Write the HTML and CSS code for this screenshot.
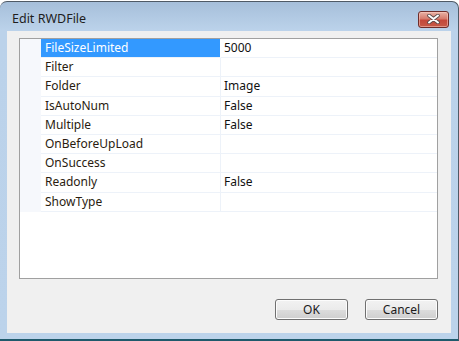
FILE: index.html
```html
<!DOCTYPE html>
<html lang="en">
<head>
    <meta charset="UTF-8">
    <title>Edit RWDFile</title>
    <link rel="stylesheet" href="styles.css">
</head>
<body>
    <div class="window">
        <div class="titlebar">
            <span class="title">Edit RWDFile</span>
            <div class="close-btn">
                <svg width="13" height="10" viewBox="0 0 13 10">
                    <path d="M2 1.5 L11 8.5 M11 1.5 L2 8.5" stroke="#5a4a4a" stroke-width="3.6" stroke-linecap="round"/>
                    <path d="M2 1.5 L11 8.5 M11 1.5 L2 8.5" stroke="#ffffff" stroke-width="2" stroke-linecap="round"/>
                </svg>
            </div>
        </div>

        <div class="client">
            <div class="grid">
                <div class="row selected">
                    <div class="gutter"></div>
                    <div class="name">FileSizeLimited</div>
                    <div class="value">5000</div>
                </div>
                <div class="row">
                    <div class="gutter"></div>
                    <div class="name">Filter</div>
                    <div class="value"></div>
                </div>
                <div class="row">
                    <div class="gutter"></div>
                    <div class="name">Folder</div>
                    <div class="value">Image</div>
                </div>
                <div class="row">
                    <div class="gutter"></div>
                    <div class="name">IsAutoNum</div>
                    <div class="value">False</div>
                </div>
                <div class="row">
                    <div class="gutter"></div>
                    <div class="name">Multiple</div>
                    <div class="value">False</div>
                </div>
                <div class="row">
                    <div class="gutter"></div>
                    <div class="name">OnBeforeUpLoad</div>
                    <div class="value"></div>
                </div>
                <div class="row">
                    <div class="gutter"></div>
                    <div class="name">OnSuccess</div>
                    <div class="value"></div>
                </div>
                <div class="row">
                    <div class="gutter"></div>
                    <div class="name">Readonly</div>
                    <div class="value">False</div>
                </div>
                <div class="row">
                    <div class="gutter"></div>
                    <div class="name">ShowType</div>
                    <div class="value"></div>
                </div>
            </div>

            <div class="buttons">
                <button class="btn">OK</button>
                <button class="btn">Cancel</button>
            </div>
        </div>
    </div>
</body>
</html>
```

FILE: styles.css
```css
* {
    margin: 0;
    padding: 0;
    box-sizing: border-box;
}

body {
    font-family: "Noto Sans", "Open Sans", sans-serif;
    font-size: 12px;
    background: #ffffff;
    width: 459px;
    height: 341px;
    overflow: hidden;
}

.window {
    margin-top: 1px;
    width: 459px;
    height: 340px;
    border-top: 1px solid #4f5a66;
    border-right: 1px solid #4f5a66;
    border-bottom: 2px solid #1f5a6c;
    border-radius: 7px 7px 0 0;
    background: linear-gradient(#a6bfda, #bbd2ea 28px, #bcd3eb);
    padding: 0 7px 6px 7px;
    display: flex;
    flex-direction: column;
}

.titlebar {
    height: 30px;
    display: flex;
    align-items: center;
    padding-left: 5px;
    padding-right: 2px;
}

.title {
    flex: 1;
    font-size: 12.5px;
    color: #1e1e1e;
    padding-top: 3px;
}

.close-btn {
    width: 31px;
    height: 17px;
    margin-top: 5px;
    border: 1px solid #6e2d2a;
    border-radius: 3px;
    background: linear-gradient(#e8b2a6, #d77b6c 45%, #c4483a 55%, #c65a48);
    display: flex;
    align-items: center;
    justify-content: center;
    box-shadow: inset 0 0 0 1px rgba(255, 210, 200, 0.5);
}

.client {
    flex: 1;
    background: #f0f0f0;
    padding: 7px 13px 13px 12px;
    display: flex;
    flex-direction: column;
}

.grid {
    height: 241px;
    background: #ffffff;
    border: 1px solid #a0a0a0;
}

.row {
    display: flex;
    height: 19.2px;
    line-height: 18px;
}

.gutter {
    width: 21px;
    background: #f6f8fc;
}

.name {
    width: 180px;
    padding-left: 4px;
    color: #2a1c10;
    border-right: 1px solid #edf2f9;
    border-bottom: 1px solid #edf2f9;
    white-space: nowrap;
}

.value {
    flex: 1;
    padding-left: 3px;
    color: #111111;
    border-bottom: 1px solid #edf2f9;
}

.row.selected .name {
    background: #3399ff;
    color: #ffffff;
    border-right-color: #ffffff;
}

.buttons {
    margin-top: 20px;
    display: flex;
    justify-content: flex-end;
    gap: 17px;
}

.btn {
    width: 73px;
    height: 21px;
    font-family: inherit;
    font-size: 12px;
    color: #1a1a1a;
    border: 1px solid #707070;
    border-radius: 3px;
    background: linear-gradient(#f2f2f2, #ebebeb 50%, #dddddd 51%, #cfcfcf);
    box-shadow: inset 0 0 0 1px #fcfcfc;
}
```
